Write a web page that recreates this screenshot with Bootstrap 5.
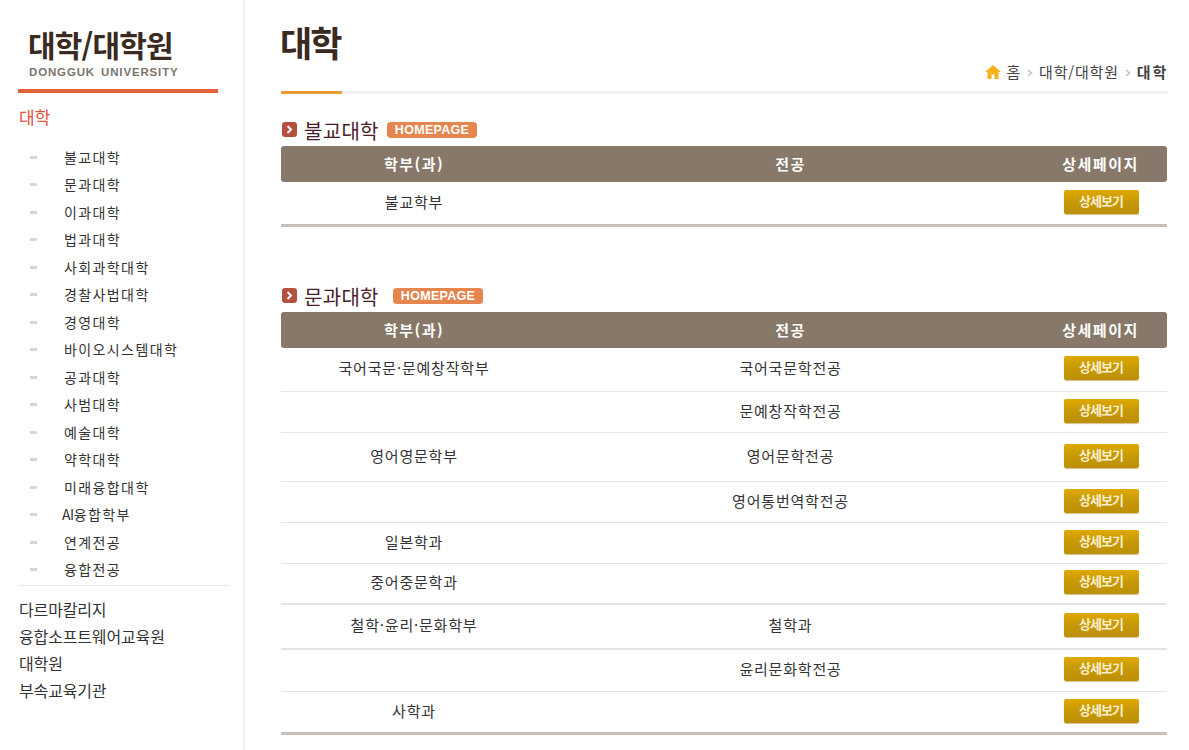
<!DOCTYPE html>
<html lang="ko">
<head>
  <meta charset="UTF-8">
  <title>대학</title>
  <meta name="viewport" content="width=device-width, initial-scale=1.0">
  <link href="https://cdn.jsdelivr.net/npm/bootstrap@5.3.0/dist/css/bootstrap.min.css" rel="stylesheet">
  <style>
    body {
      background-color: #fff;
      color: #222;
      font-family: "Noto Sans CJK KR", "Liberation Sans", sans-serif;
      font-size: 14px;
      margin: 0;
      height: 750px;
      overflow: hidden;
    }

    .side-col {
      width: 245px;
      height: 750px;
      flex: none;
      border-right: 2px solid #f0f0f0;
      padding: 26px 13px 0 18px;
    }

    .side-logo {
      width: 200px;
      height: 67px;
      border-bottom: 4px solid #e0633a;
      padding-left: 10px;
    }

    .logo-ko {
      font-size: 30px;
      font-weight: 700;
      line-height: 36px;
      color: #3a2a22;
      letter-spacing: -0.8px;
    }

    .logo-en {
      font-family: "Liberation Sans", sans-serif;
      font-size: 11.5px;
      font-weight: 700;
      line-height: 14px;
      margin-top: 3px;
      margin-left: 1px;
      color: #7b746c;
      letter-spacing: 0.85px;
      word-spacing: 2px;
    }

    .side-active {
      font-size: 17px;
      line-height: 24px;
      color: #e0503a;
      margin: 12px 0 14.6px 1px;
    }

    .side-sub {
      list-style: none;
      margin: 0;
      padding: 0 0 1px 0;
      border-bottom: 1px solid #e9e9e9;
    }

    .side-sub li {
      height: 27.5px;
      line-height: 27px;
      padding-left: 46px;
      position: relative;
      letter-spacing: 1.4px;
      color: #333;
    }

    .side-sub li::before {
      content: "";
      position: absolute;
      left: 12px;
      top: 12px;
      width: 7px;
      height: 3px;
      background-color: #d6d6d6;
    }

    .ai-pre {
      margin-left: -2px;
      letter-spacing: -0.5px;
    }

    .side-top {
      margin-top: 10.6px;
    }

    .side-top div {
      font-size: 16px;
      line-height: 27px;
      color: #333;
      letter-spacing: -0.15px;
      margin-left: 1px;
    }

    .main-col {
      width: 887px;
      margin-left: 36px;
      flex: none;
    }

    .page-head {
      height: 94px;
      border-bottom: 3px solid #f0f0f0;
      position: relative;
    }

    .page-head::after {
      content: "";
      position: absolute;
      left: 0;
      bottom: -3px;
      width: 61px;
      height: 3px;
      background-color: #ec9a35;
    }

    .page-title {
      font-size: 35px;
      font-weight: 700;
      line-height: 44px;
      color: #3a2a22;
      padding-top: 20px;
      margin: 0 0 0 -1px;
      letter-spacing: -2px;
    }

    .crumbs {
      position: absolute;
      right: 0;
      top: 62px;
      font-size: 15px;
      line-height: 20px;
      color: #444;
      letter-spacing: 0.8px;
    }

    .crumbs b {
      letter-spacing: 1.8px;
    }

    .crumb-home {
      margin-right: 5px;
    }

    .crumb-sep {
      margin: 2px 6px 0 6px;
    }

    .sect-title {
      height: 28px;
      padding-bottom: 5px;
      margin-top: 24px;
      font-size: 20px;
      line-height: 24px;
      letter-spacing: 0.3px;
      color: #4a1c2a;
    }

    .sect-gap {
      margin-top: 57px;
    }

    .sect-name {
      padding-top: 3px;
    }

    .sect-mark {
      width: 15px;
      height: 15px;
      border-radius: 3px;
      background-color: #b5503f;
      color: #fff;
      margin: 0 7px 0 1px;
      display: flex;
      align-items: center;
      justify-content: center;
    }

    .hp-tag {
      font-family: "Liberation Sans", sans-serif;
      background-color: #e5864f;
      color: #fff;
      font-size: 12.5px;
      font-weight: 700;
      line-height: 16px;
      height: 16px;
      letter-spacing: 0.3px;
      padding: 0 8px;
      border-radius: 4px;
      margin-left: 8px;
    }

    .hp-wide {
      margin-left: 14px;
    }

    .dept-table {
      width: 886px;
      table-layout: fixed;
      border-collapse: separate;
      border-spacing: 0;
      text-align: center;
      font-size: 15px;
      color: #333;
      letter-spacing: 0.8px;
      margin: 0;
    }

    .dept-table th {
      background-color: #88786a;
      color: #fff;
      height: 36px;
      font-weight: 700;
      padding: 0;
      letter-spacing: 1.5px;
    }

    .dept-table th:first-child { border-radius: 3px 0 0 3px; }
    .dept-table th:last-child { border-radius: 0 3px 3px 0; }

    .dept-table td {
      padding: 0 0 2px 0;
      border-bottom: 1px solid #e4e4e4;
      vertical-align: middle;
    }

    .dept-table td:last-child {
      padding: 0 0 4px 1px;
    }

    .dept-table tr:last-child td {
      border-bottom: 3px solid #c8c0b8;
    }

    .dept-table tr.heavy td {
      border-bottom: 2px solid #e4e4e4;
    }

    .more-btn {
      display: inline-block;
      width: 75px;
      height: 24px;
      line-height: 21px;
      font-size: 13px;
      font-weight: 700;
      letter-spacing: -1px;
      color: #fbeecb;
      border-radius: 2px;
      background: linear-gradient(#dfa900, #c99a06 45%, #bb8f08);
      box-shadow: 0 1px 1px #d8c48a;
    }
  </style>
</head>
<body>
  <div class="d-flex">
    <!-- 사이드 메뉴 -->
    <div class="side-col">
      <div class="side-logo">
        <div class="logo-ko">대학/대학원</div>
        <div class="logo-en">DONGGUK UNIVERSITY</div>
      </div>
      <div class="side-active">대학</div>
      <ul class="side-sub">
        <li>불교대학</li>
        <li>문과대학</li>
        <li>이과대학</li>
        <li>법과대학</li>
        <li>사회과학대학</li>
        <li>경찰사법대학</li>
        <li>경영대학</li>
        <li>바이오시스템대학</li>
        <li>공과대학</li>
        <li>사범대학</li>
        <li>예술대학</li>
        <li>약학대학</li>
        <li>미래융합대학</li>
        <li><span class="ai-pre">AI</span>융합학부</li>
        <li>연계전공</li>
        <li>융합전공</li>
      </ul>
      <div class="side-top">
        <div>다르마칼리지</div>
        <div>융합소프트웨어교육원</div>
        <div>대학원</div>
        <div>부속교육기관</div>
      </div>
    </div>

    <!-- 본문 -->
    <div class="main-col">
      <div class="page-head">
        <h1 class="page-title">대학</h1>
        <div class="crumbs d-flex align-items-center">
          <svg width="16" height="14" viewBox="0 0 16 14" class="crumb-home"><path d="M8 0 0 7h2.500v7h4v-4.500h3V14h4V7H16z" fill="#f6b41c"/></svg>
          <span>홈</span>
          <svg class="crumb-sep" width="6" height="8" viewBox="0 0 6 8"><path d="M1 1l3.500 3L1 7" fill="none" stroke="#c4c4c4" stroke-width="1.600"/></svg>
          <span>대학/대학원</span>
          <svg class="crumb-sep" width="6" height="8" viewBox="0 0 6 8"><path d="M1 1l3.500 3L1 7" fill="none" stroke="#c4c4c4" stroke-width="1.600"/></svg>
          <b class="fw-bold">대학</b>
        </div>
      </div>

      <div class="sect-title d-flex align-items-center">
        <span class="sect-mark"><svg width="7" height="9" viewBox="0 0 7 9"><path d="M1.500 1 5 4.500 1.500 8" fill="none" stroke="#fff" stroke-width="2"/></svg></span>
        <span class="sect-name">불교대학</span><span class="hp-tag">HOMEPAGE</span>
      </div>
      <table class="dept-table" id="tbl1"></table>

      <div class="sect-title sect-gap d-flex align-items-center">
        <span class="sect-mark"><svg width="7" height="9" viewBox="0 0 7 9"><path d="M1.500 1 5 4.500 1.500 8" fill="none" stroke="#fff" stroke-width="2"/></svg></span>
        <span class="sect-name">문과대학</span><span class="hp-tag hp-wide">HOMEPAGE</span>
      </div>
      <table class="dept-table" id="tbl2"></table>
    </div>
  </div>

  <script src="https://cdn.jsdelivr.net/npm/bootstrap@5.3.0/dist/js/bootstrap.bundle.min.js"></script>
  <script>
    const tbl1 = [["불교학부", "", 45]];
    const tbl2 = [
      ["국어국문·문예창작학부", "국어국문학전공", 44],
      ["", "문예창작학전공", 41],
      ["영어영문학부", "영어문학전공", 49],
      ["", "영어통번역학전공", 41],
      ["일본학과", "", 41],
      ["중어중문학과", "", 41, true],
      ["철학·윤리·문화학부", "철학과", 45, true],
      ["", "윤리문화학전공", 42],
      ["사학과", "", 43]
    ];

    const renderTable = (id, rows) => {
      let html = `<colgroup><col style="width:266px"><col style="width:487px"><col style="width:133px"></colgroup>
        <thead><tr><th>학부(과)</th><th>전공</th><th>상세페이지</th></tr></thead><tbody>`;
      rows.forEach(r => {
        html += `<tr class="${r[3] ? "heavy" : ""}" style="height:${r[2]}px"><td>${r[0]}</td><td>${r[1]}</td><td><span class="more-btn">상세보기</span></td></tr>`;
      });
      document.getElementById(id).innerHTML = html + "</tbody>";
    };

    renderTable("tbl1", tbl1);
    renderTable("tbl2", tbl2);
  </script>
</body>
</html>
